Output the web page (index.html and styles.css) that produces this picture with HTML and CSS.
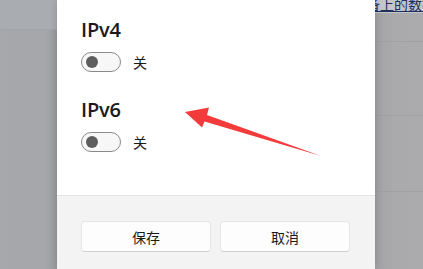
FILE: index.html
```html
<!DOCTYPE html>
<html lang="zh">
<head>
<meta charset="utf-8">
<link rel="stylesheet" href="styles.css">
</head>
<body>
<div class="screen">
  <div class="backdrop left">
    <div class="band-top"></div>
  </div>
  <div class="dialog">
    <div class="content">
      <div class="section">
        <div class="title">IPv4</div>
        <div class="toggle-row">
          <span class="toggle"><span class="knob"></span></span>
          <span class="state">关</span>
        </div>
      </div>
      <div class="section">
        <div class="title">IPv6</div>
        <div class="toggle-row">
          <span class="toggle"><span class="knob"></span></span>
          <span class="state">关</span>
        </div>
      </div>
    </div>
    <div class="footer">
      <button class="btn">保存</button>
      <button class="btn">取消</button>
    </div>
  </div>
  <div class="backdrop right">
    <div class="link-band"><span class="link">备上的数据</span></div>
    <div class="row r1"></div>
    <div class="row r2"></div>
    <div class="row r3"></div>
  </div>
  <svg class="arrow" width="423" height="269" viewBox="0 0 423 269">
    <polygon points="185,112 209,107.5 207,115 321,156 204.5,121.5 202,127.5" fill="#f43b3b"/>
  </svg>
</div>
</body>
</html>
```

FILE: styles.css
```css
html, body {
  margin: 0;
  padding: 0;
  width: 423px;
  height: 269px;
  overflow: hidden;
  background: #a8a9ac;
}
.screen {
  position: relative;
  display: flex;
  width: 423px;
  height: 269px;
  overflow: hidden;
  font-family: "Open Sans", "Noto Sans CJK SC", sans-serif;
}
.backdrop {
  flex: none;
  background: #a7a8ab;
  display: flex;
  flex-direction: column;
}
.backdrop.left {
  width: 57px;
  background: linear-gradient(to right, #a6a8ac 0%, #a5a7aa 80%, #9a9c9f 100%);
}
.band-top {
  height: 29px;
  border-bottom: 1px solid #a1a3a6;
  background: #a9acb0;
}
.backdrop.right {
  width: 48px;
  background: linear-gradient(to right, #a3a3a6 0%, #aaaaad 40%, #ababae 100%);
}
.link-band {
  height: 13px;
  background: #c3c6cd;
  overflow: hidden;
  position: relative;
}
.link {
  position: absolute;
  left: -9px;
  top: -4px;
  font-family: "Noto Sans CJK SC", sans-serif;
  font-size: 14px;
  line-height: 16px;
  color: #1e2f5c;
  text-decoration: underline;
  white-space: nowrap;
}
.row { border-bottom: 1px solid #9fa0a3; }
.r1 { height: 28px; }
.r2 { height: 73px; }
.r3 { height: 75px; }
.dialog {
  flex: none;
  width: 318px;
  background: #ffffff;
  display: flex;
  flex-direction: column;
  box-shadow: 0 0 8px rgba(0,0,0,0.18);
  z-index: 1;
}
.content {
  height: 196px;
  padding: 16px 24px 0;
  box-sizing: border-box;
  border-bottom: 1px solid #e5e5e5;
}
.section { margin-bottom: 24px; }
.title {
  font-size: 20px;
  font-weight: 600;
  line-height: 28px;
  color: #1a1a1a;
  letter-spacing: -0.2px;
}
.toggle-row {
  display: flex;
  align-items: center;
  gap: 12px;
  margin-top: 8px;
  height: 20px;
}
.toggle {
  width: 40px;
  height: 20px;
  box-sizing: border-box;
  border: 1px solid #8a8a8a;
  border-radius: 10px;
  background: #f7f7f7;
  display: flex;
  align-items: center;
  padding-left: 4px;
}
.knob {
  width: 12px;
  height: 12px;
  border-radius: 50%;
  background: #5d5d5d;
}
.state {
  font-family: "Noto Sans CJK SC", sans-serif;
  font-size: 14px;
  color: #1a1a1a;
  line-height: 20px;
}
.footer {
  height: 73px;
  background: #f3f3f3;
  display: flex;
  gap: 9px;
  padding: 25px 24px 0;
  box-sizing: border-box;
}
.btn {
  width: 130px;
  height: 31px;
  box-sizing: border-box;
  background: #fdfdfd;
  border: 1px solid #e6e6e6;
  border-bottom-color: #cfcfcf;
  border-radius: 4px;
  font-family: "Noto Sans CJK SC", sans-serif;
  font-size: 14px;
  color: #1a1a1a;
  padding: 0;
}
.arrow {
  position: absolute;
  left: 0;
  top: 0;
  z-index: 2;
}
```
